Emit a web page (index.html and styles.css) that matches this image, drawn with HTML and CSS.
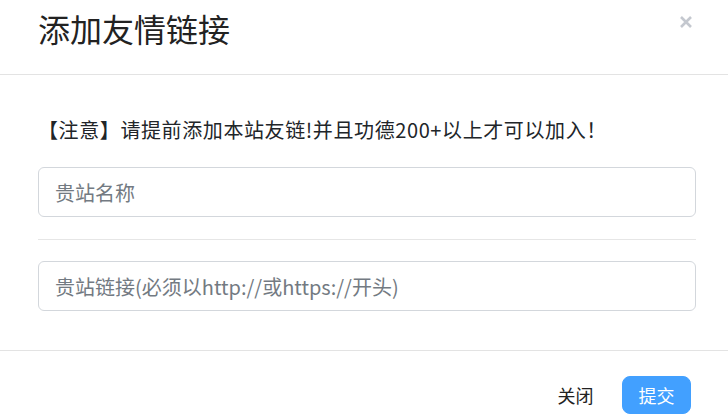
FILE: index.html
```html
<!DOCTYPE html>
<html lang="zh-CN">
<head>
<meta charset="utf-8">
<title>添加友情链接</title>
<link rel="stylesheet" href="styles.css">
</head>
<body>
<div class="modal">
  <div class="modal-header">
    <h5 class="modal-title">添加友情链接</h5>
    <button class="close" type="button" aria-label="Close">
      <svg width="12" height="12" viewBox="0 0 12 12"><path d="M1 1L11 11M11 1L1 11" stroke="#c4c8cf" stroke-width="2.6" stroke-linecap="butt"/></svg>
    </button>
  </div>
  <div class="modal-body">
    <p class="notice">【注意】请提前添加本站友链!并且功德200+以上才可以加入！</p>
    <input class="form-control" type="text" placeholder="贵站名称">
    <hr class="divider">
    <input class="form-control" type="text" placeholder="贵站链接(必须以http://或https://开头)">
  </div>
  <div class="modal-footer">
    <button class="btn btn-secondary" type="button">关闭</button>
    <button class="btn btn-primary" type="button">提交</button>
  </div>
</div>
</body>
</html>
```

FILE: styles.css
```css
* { box-sizing: border-box; }
html, body {
  margin: 0;
  padding: 0;
  background: #fff;
  overflow: hidden;
}
body {
  width: 728px;
  height: 419px;
  font-family: "Noto Sans CJK SC", "Noto Sans", sans-serif;
  color: #212529;
}
.modal {
  display: flex;
  flex-direction: column;
  width: 728px;
  height: 419px;
}
.modal-header {
  position: relative;
  height: 75px;
  padding: 12px 38px 0 38px;
  border-bottom: 1px solid #e3e3e3;
}
.modal-title {
  margin: 0;
  font-size: 32px;
  line-height: 32px;
  font-weight: 400;
  color: #222;
}
.close {
  position: absolute;
  left: 680px;
  top: 16px;
  width: 12px;
  height: 12px;
  padding: 0;
  border: 0;
  background: none;
  display: flex;
}
.modal-body {
  display: flex;
  flex-direction: column;
  padding: 40px 32px 39px 38px;
  border-bottom: 1px solid #e3e3e3;
}
.notice {
  margin: 0 0 22px 0;
  font-size: 20px;
  line-height: 30px;
  letter-spacing: 0.6px;
  white-space: nowrap;
  color: #212529;
}
.form-control {
  display: block;
  width: 658px;
  height: 50px;
  padding: 0 16px;
  border: 1px solid #d3d7dc;
  border-radius: 6px;
  font-family: "Noto Sans CJK SC", "Noto Sans", sans-serif;
  font-size: 20px;
  color: #495057;
  background: #fff;
  outline: none;
}
.form-control::placeholder {
  color: #737a82;
}
.divider {
  width: 658px;
  margin: 22px 0 21px 0;
  border: 0;
  border-top: 1px solid #e6e6e6;
  height: 0;
}
.modal-footer {
  display: flex;
  justify-content: flex-end;
  align-items: flex-start;
  gap: 12px;
  padding: 25px 37px 0 38px;
}
.btn {
  height: 38px;
  padding: 0 15.5px;
  border: 1px solid transparent;
  border-radius: 8px;
  font-family: "Noto Sans CJK SC", "Noto Sans", sans-serif;
  font-size: 18px;
  line-height: 36px;
  cursor: pointer;
}
.btn-secondary {
  background: #fff;
  color: #222;
}
.btn-primary {
  background: #42a0ff;
  border-color: #42a0ff;
  color: #fff;
}
```
